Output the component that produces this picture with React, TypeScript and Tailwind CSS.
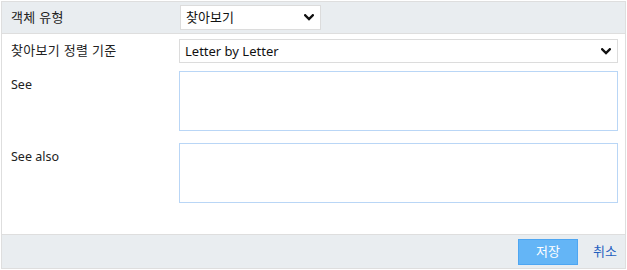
const font = "font-['Noto_Sans','Noto_Sans_CJK_KR',sans-serif]";

function Chevron() {
  return (
    <svg width="10" height="7" viewBox="0 0 10 7" className="shrink-0">
      <path d="M1.2 1.3 L5 5 L8.8 1.3" fill="none" stroke="#111" strokeWidth="2.4" strokeLinecap="square" />
    </svg>
  );
}

function SelectBox({ value, className }: { value: string; className: string }) {
  return (
    <div className={`flex items-center justify-between border border-[#dcdcdc] bg-white pl-[5px] pr-[6px] text-[13px] text-[#111] ${className}`}>
      <span className="leading-none">{value}</span>
      <Chevron />
    </div>
  );
}

export default function App() {
  return (
    <div className={`${font} h-[270px] w-[627px] bg-white pl-px pt-px text-[#222]`}>
      <div className="flex h-[268px] w-[625px] flex-col border border-[#dedede]">
        <div className="flex h-[32px] items-center border-b border-[#dedede] bg-[#e9edf0]">
          <label className="w-[178px] pl-[9px] text-[13px] tracking-[0.3px]">객체 유형</label>
          <SelectBox value="찾아보기" className="h-[25px] w-[141px]" />
        </div>

        <div className="flex flex-1 flex-col pr-[7px]">
          <div className="mt-[5px] flex h-[24px] items-center">
            <label className="w-[177px] pl-[9px] text-[13px] tracking-[0.3px]">찾아보기 정렬 기준</label>
            <SelectBox value="Letter by Letter" className="h-[24px] flex-1" />
          </div>

          <div className="mt-[8px] flex">
            <label className="w-[177px] pl-[9px] pt-[5px] text-[12.5px]">See</label>
            <textarea className="h-[60px] flex-1 resize-none border border-[#b9d6f6] bg-white outline-none" />
          </div>

          <div className="mt-[12px] flex">
            <label className="w-[177px] pl-[9px] pt-[5px] text-[12.5px]">See also</label>
            <textarea className="h-[60px] flex-1 resize-none border border-[#b9d6f6] bg-white outline-none" />
          </div>
        </div>

        <div className="flex h-[34px] items-center justify-end gap-[15px] border-t border-[#dedede] bg-[#e9edf0] pr-[8px]">
          <button className="h-[26px] w-[60px] border border-[#4ea6f2] bg-[#64b5f6] text-[13px] text-white">저장</button>
          <a className="text-[13px] text-[#1f5fbf]">취소</a>
        </div>
      </div>
    </div>
  );
}
